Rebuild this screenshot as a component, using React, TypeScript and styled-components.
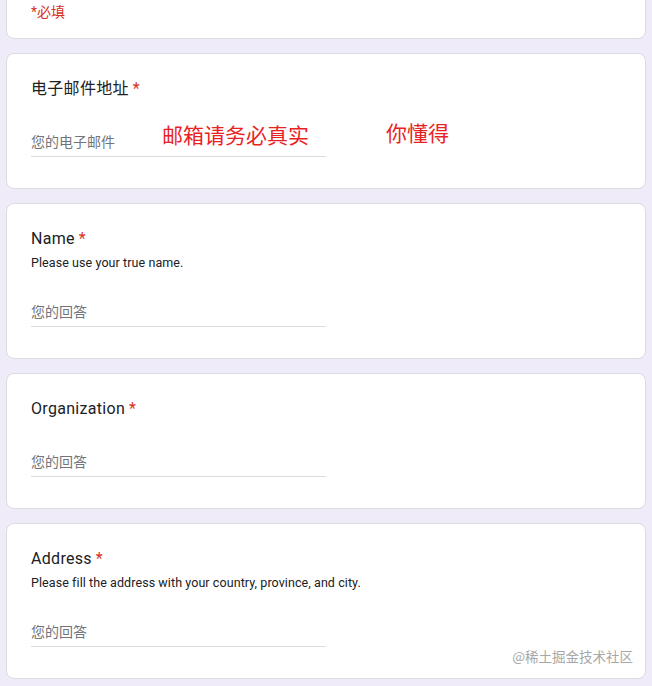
import React from "react";
import styled, { createGlobalStyle } from "styled-components";

const GlobalStyle = createGlobalStyle`
  html, body {
    margin: 0;
    padding: 0;
    background: #f0ebf8;
  }
  body {
    font-family: Roboto, "Noto Sans CJK SC", sans-serif;
    color: #202124;
  }
`;

const Page = styled.div`
  display: flex;
  flex-direction: column;
  gap: 14px;
  padding: 0 6px 12px;
  margin-top: -23px;
`;

const Card = styled.div`
  position: relative;
  display: flex;
  flex-direction: column;
  background: #fff;
  border: 1px solid #dadce0;
  border-radius: 8px;
  padding: 23px 24px 31px;
`;

const HeaderCard = styled(Card)`
  padding: 24px 24px 16px;
`;

const Required = styled.div`
  font-family: Roboto, "Noto Sans CJK SC", sans-serif;
  font-size: 14px;
  line-height: 20px;
  color: #d93025;
`;

const Title = styled.div`
  font-family: Roboto, "Noto Sans CJK SC", sans-serif;
  font-size: 16px;
  line-height: 24px;
  letter-spacing: 0.3px;
  color: #202124;
`;

const Star = styled.span`
  color: #d93025;
  margin-left: 4px;
`;

const Desc = styled.div`
  font-family: Roboto, "Noto Sans CJK SC", sans-serif;
  font-size: 12.5px;
  line-height: 18px;
  letter-spacing: 0.08px;
  margin-top: 3px;
  color: #202124;
`;

const Field = styled.div<{ $tight?: boolean }>`
  margin-top: ${(p) => (p.$tight ? 28 : 29)}px;
  width: 295px;
  padding-bottom: 2px;
  border-bottom: 1px solid #dadce0;
  font-family: Roboto, "Noto Sans CJK SC", sans-serif;
  font-size: 14px;
  line-height: 24px;
  color: #70757a;
`;

const Note = styled.div<{ $left: number; $top: number }>`
  position: absolute;
  left: ${(p) => p.$left}px;
  top: ${(p) => p.$top}px;
  font-family: "Noto Sans CJK SC", sans-serif;
  font-size: 21px;
  line-height: 28px;
  color: #e8231f;
`;

const Watermark = styled.div`
  position: absolute;
  right: 12px;
  bottom: 12px;
  font-family: "Noto Sans CJK SC", sans-serif;
  font-size: 13.5px;
  line-height: 20px;
  color: #a8a8a8;
`;

type Question = {
  title: string;
  desc?: string;
  placeholder: string;
};

const questions: Question[] = [
  { title: "电子邮件地址", placeholder: "您的电子邮件" },
  { title: "Name", desc: "Please use your true name.", placeholder: "您的回答" },
  { title: "Organization", placeholder: "您的回答" },
  {
    title: "Address",
    desc: "Please fill the address with your country, province, and city.",
    placeholder: "您的回答",
  },
];

export default function App() {
  return (
    <>
      <GlobalStyle />
      <Page>
        <HeaderCard>
          <Required>*必填</Required>
        </HeaderCard>
        {questions.map((q, i) => (
          <Card key={q.title}>
            <Title>
              {q.title}
              <Star>*</Star>
            </Title>
            {q.desc && <Desc>{q.desc}</Desc>}
            <Field $tight={!!q.desc}>{q.placeholder}</Field>
            {i === 0 && (
              <>
                <Note $left={155} $top={66}>邮箱请务必真实</Note>
                <Note $left={379} $top={64}>你懂得</Note>
              </>
            )}
            {i === questions.length - 1 && <Watermark>@稀土掘金技术社区</Watermark>}
          </Card>
        ))}
      </Page>
    </>
  );
}
